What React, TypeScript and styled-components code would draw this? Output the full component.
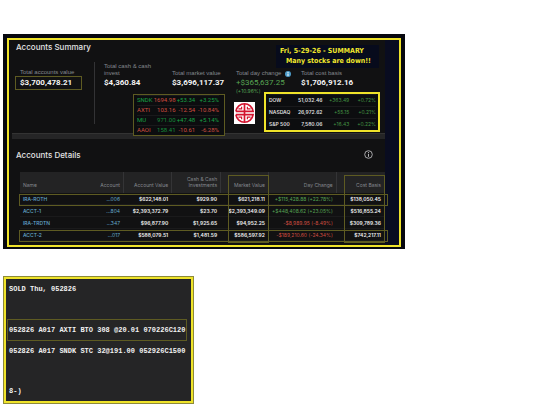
import React from "react";
import styled, { createGlobalStyle } from "styled-components";

const green = "#56a452";
const red = "#cf4d41";
const yellow = "#efe32a";
const olive = "#5e5b22";

const GlobalStyle = createGlobalStyle`
  * { box-sizing: border-box; }
  body { margin: 0; background: #fff; }
  h1, h2, dl, dd, dt, p { margin: 0; font-weight: inherit; }
`;

const Page = styled.main`
  display: flex;
  flex-direction: column;
  align-items: flex-start;
  gap: 27px;
  padding: 34px 3px 2px;
  font-family: Inter, "Liberation Sans", sans-serif;
`;

const Dashboard = styled.section`
  width: 100%;
  max-width: 402px;
  padding: 4px 4px 2px;
  background: #07080f;
`;

const Frame = styled.div`
  position: relative;
  border: 2px solid ${yellow};
  padding-right: 14px;
  background: #090c20;
`;

const Content = styled.div`
  background: #111112;
`;

const Heading = styled.h1`
  color: #e4e4e4;
  font-size: 8px;
  line-height: 10px;
  font-weight: 500;
`;

const SummaryHead = styled.header`
  height: 22px;
  padding: 2px 7px;
`;

const Banner = styled.p`
  position: absolute;
  top: 5px;
  right: 20px;
  width: 103px;
  padding: 1px 0 2px;
  background: #070b1c;
  color: #f0e62c;
  font: 700 7px/10px "DejaVu Sans Condensed", "DejaVu Sans", sans-serif;
  white-space: nowrap;
`;

const BannerLine = styled.span<{ $indent?: boolean }>`
  display: block;
  padding-left: ${(p) => (p.$indent ? 10 : 4)}px;
`;

const SummaryBody = styled.div`
  display: flex;
  align-items: flex-start;
`;

const AccountsTotal = styled.div`
  flex: 0 0 86px;
  height: 62px;
  padding-left: 6px;
  border-right: 1px solid #333335;
`;

const Figures = styled.div`
  flex: 1;
  padding-left: 9px;
`;

const Metrics = styled.dl`
  display: grid;
  grid-template-columns: 68fr 64fr 65fr 84fr;
`;

const Metric = styled.div`
  padding-top: 1px;
  white-space: nowrap;
`;

const MetricLabel = styled.dt`
  display: flex;
  align-items: flex-end;
  gap: 4px;
  height: 14px;
  color: #85888e;
  font: 400 6px/7px "Liberation Sans", sans-serif;
  white-space: pre-line;
`;

const MetricValue = styled.dd<{ $up?: boolean; $boxed?: boolean }>`
  width: fit-content;
  color: ${(p) => (p.$up ? "#58a653" : "#f4f4f4")};
  font: ${(p) => (p.$up ? 400 : 700)} 8px/12px Roboto, sans-serif;
  ${(p) => p.$boxed && `border: 1px solid ${olive}; padding: 0 9px 0 4px;`}
`;

const AccountsLabel = styled(MetricLabel)`
  padding-left: 5px;
`;

const MetricNote = styled.dd`
  color: ${green};
  font-size: 5px;
  line-height: 5px;
`;

const Boxes = styled.div`
  position: relative;
  z-index: 1;
  display: flex;
  align-items: flex-start;
  gap: 9px;
  margin-top: -2px;
  padding: 0 5px 0 29px;
`;

const Quotes = styled.table`
  table-layout: fixed;
  border-collapse: separate;
  border-spacing: 0;
  background: #0c0d0f;
  white-space: nowrap;
`;

const TickerQuotes = styled(Quotes)`
  flex: 0 0 92px;
  width: 92px;
  margin-top: 2px;
  padding: 0 5px 0 3px;
  border: 1px solid ${olive};
  font: 400 6px/6px Roboto, sans-serif;
`;

const IndexQuotes = styled(Quotes)`
  flex: 1;
  padding: 0 2px 0 3px;
  border: 2px solid ${yellow};
  font-size: 5px;
  line-height: 6px;
`;

const QuoteCell = styled.td<{ $color: string; $share: number; $bold?: boolean; $tall?: boolean }>`
  width: ${(p) => p.$share}%;
  height: ${(p) => (p.$tall ? 12 : 10)}px;
  padding: 0 0 ${(p) => (p.$tall ? 2 : 1)}px;
  color: ${(p) => p.$color};
  font-weight: ${(p) => (p.$bold ? 600 : 400)};
  text-align: right;
  border-top: 1px solid #19191b;
  &:first-child { text-align: left; }
`;

const Logo = styled.svg`
  flex: 0 0 21px;
  height: 22px;
  margin-top: 10px;
`;

const Divider = styled.hr`
  height: 6px;
  margin: -3px 0 0 3px;
  border: 0;
  border-top: 1px solid #333;
  background: #252526;
`;

const DetailsHead = styled.header`
  display: flex;
  align-items: center;
  justify-content: space-between;
  height: 33px;
  padding: 0 12px 2px 7px;
`;

const IconButton = styled.button`
  display: flex;
  padding: 0;
  border: 0;
  background: none;
  color: #b5b5b8;
`;

const TableArea = styled.div`
  padding: 0 0 4px 11px;
`;

const Accounts = styled.table`
  position: relative;
  width: 100%;
  table-layout: fixed;
  border-collapse: separate;
  border-spacing: 0;
  font-size: 5px;
  line-height: 6px;
  white-space: nowrap;
`;

const HeadCell = styled.th<{ $share: number; $line?: boolean; $marked?: boolean }>`
  position: relative;
  width: ${(p) => p.$share}%;
  height: 21px;
  padding: 0 3px 5px;
  background: #232324;
  border-right: 1px solid ${(p) => (p.$line ? "#343436" : "#232324")};
  color: #85888e;
  font-weight: 400;
  text-align: right;
  vertical-align: bottom;
  white-space: pre-line;
  &:first-child { text-align: left; }
  ${(p) =>
    p.$marked &&
    `&::after {
      content: "";
      position: absolute;
      z-index: 1;
      top: 3px;
      right: -1px;
      left: 7px;
      height: 66px;
      border: 1px solid ${olive};
    }`}
`;

const Row = styled.tr<{ $marked?: boolean }>`
  position: relative;
  ${(p) =>
    p.$marked &&
    `&::after {
      content: "";
      position: absolute;
      top: 1px;
      right: -3px;
      left: -1px;
      height: 10px;
      border: 1px solid ${olive};
    }`}
`;

const Cell = styled.td<{ $color?: string }>`
  height: 12px;
  padding: 0 4px 0 3px;
  color: ${(p) => p.$color || "#f0f0f0"};
  font-weight: ${(p) => (p.$color ? 400 : 600)};
  text-align: right;
  border-bottom: 1px solid #1a1a1b;
`;

const NameCell = styled(Cell)`
  text-align: left;
`;

const AccountLink = styled.a`
  color: #65a9cd;
  font-weight: 500;
  text-decoration: none;
`;

const Note = styled.section`
  width: 191px;
  max-width: 100%;
  padding: 0 4px 0 1px;
  border: 3px solid ${yellow};
  outline: 1px solid #8d8a3a;
  outline-offset: -1px;
  background: #252526;
  color: #f2f2f2;
  font: 700 7px/20px "Liberation Mono", monospace;
  white-space: pre;
`;

const NoteLine = styled.p<{ $marked?: boolean }>`
  min-height: 20px;
  padding-left: 1px;
  border: 1px solid ${(p) => (p.$marked ? olive : "transparent")};
  border-width: ${(p) => (p.$marked ? "1px" : "0 1px")};
`;

const tickers = [
  ["SNDK", "1694.98", "+53.34", "+3.25%", red, "#18a045"],
  ["AXTI", "103.16", "-12.54", "-10.84%", red, red],
  ["MU", "971.00", "+47.48", "+5.14%", "#168b3c", "#18a045"],
  ["AAOI", "158.41", "-10.61", "-6.28%", "#168b3c", red],
];

const indexes = [
  ["DOW", "51,032.46", "+363.49", "+0.72%"],
  ["NASDAQ", "26,972.62", "+55.15", "+0.21%"],
  ["S&P 500", "7,580.06", "+16.43", "+0.22%"],
];

const columns = [
  { label: "Name", share: 16.4 },
  { label: "Account", share: 12.1, line: true },
  { label: "Account Value", share: 13.2, line: true },
  { label: "Cash & Cash\nInvestments", share: 13.4, line: true },
  { label: "Market Value", share: 13.1, line: true, marked: true },
  { label: "Day Change", share: 18.6, line: true },
  { label: "Cost Basis", share: 13.2, marked: true },
];

const accounts = [
  { name: "IRA-ROTH", id: "...006", value: "$622,148.01", cash: "$929.90", market: "$621,218.11", day: "+$115,428.88 (+22.78%)", basis: "$138,050.45", marked: true },
  { name: "ACCT-1", id: "...804", value: "$2,393,372.79", cash: "$23.70", market: "$2,393,349.09", day: "+$448,408.62 (+23.05%)", basis: "$516,855.24" },
  { name: "IRA-TRDTN", id: "...347", value: "$96,877.90", cash: "$1,925.65", market: "$94,952.25", day: "-$8,989.95 (-8.49%)", basis: "$309,789.36" },
  { name: "ACCT-2", id: "...017", value: "$588,079.51", cash: "$1,481.59", market: "$586,597.92", day: "-$189,210.60 (-24.34%)", basis: "$742,217.11", marked: true },
];

const noteLines = [
  "SOLD Thu, 052826",
  "",
  "052826 A017 AXTI BTO 308 @20.01 070226C120",
  "052826 A017 SNDK STC 32@191.00 052926C1500",
  "",
  "8-)",
];

function Emblem() {
  return (
    <Logo viewBox="0 0 21 22" aria-label="Longevity emblem" role="img">
      <rect width="21" height="22" fill="#fff" />
      <g fill="none" stroke="#d3142f" strokeWidth="1.7">
        <path d="M1.9 9.4A8.7 9 0 0 1 19.1 9.4H1.9M1.9 12.6A8.7 9 0 0 0 19.1 12.6H1.9" />
        <path d="M10.5 2v18" />
        <path d="M7.6 4.8v2H4.4M13.4 4.8v2h3.2M7.6 17.2v-2H4.4M13.4 17.2v-2h3.2" strokeWidth="1.2" />
      </g>
    </Logo>
  );
}

export default function App() {
  return (
    <>
      <GlobalStyle />
      <Page>
        <Dashboard>
          <Frame>
            <Content>
              <SummaryHead>
                <Heading>Accounts Summary</Heading>
              </SummaryHead>
              <SummaryBody>
                <AccountsTotal>
                  <dl>
                    <AccountsLabel>Total accounts value</AccountsLabel>
                    <MetricValue $boxed>$3,700,478.21</MetricValue>
                  </dl>
                </AccountsTotal>
                <Figures>
                  <Metrics>
                    <Metric>
                      <MetricLabel>{"Total cash & cash\ninvest"}</MetricLabel>
                      <MetricValue>$4,360.84</MetricValue>
                    </Metric>
                    <Metric>
                      <MetricLabel>Total market value</MetricLabel>
                      <MetricValue>$3,696,117.37</MetricValue>
                    </Metric>
                    <Metric>
                      <MetricLabel>
                        Total day change
                        <svg width="6" height="6" viewBox="0 0 6 6" aria-hidden="true">
                          <circle cx="3" cy="3" r="3" fill="#4d9cc9" />
                          <path d="M3 1v1M3 2.5v2.5" stroke="#fff" />
                        </svg>
                      </MetricLabel>
                      <MetricValue $up>+$365,637.25</MetricValue>
                      <MetricNote>(+10.96%)</MetricNote>
                    </Metric>
                    <Metric>
                      <MetricLabel>Total cost basis</MetricLabel>
                      <MetricValue>$1,706,912.16</MetricValue>
                    </Metric>
                  </Metrics>
                  <Boxes>
                    <TickerQuotes>
                      <tbody>
                        {tickers.map(([name, price, change, pct, priceColor, color]) => (
                          <tr key={name}>
                            <QuoteCell $share={20} $color={color}>{name}</QuoteCell>
                            <QuoteCell $share={27} $color={priceColor}>{price}</QuoteCell>
                            <QuoteCell $share={24} $color={color}>{change}</QuoteCell>
                            <QuoteCell $share={29} $color={color}>{pct}</QuoteCell>
                          </tr>
                        ))}
                      </tbody>
                    </TickerQuotes>
                    <Emblem />
                    <IndexQuotes>
                      <tbody>
                        {indexes.map(([name, level, change, pct]) => (
                          <tr key={name}>
                            <QuoteCell $share={24} $tall $bold $color="#dedede">{name}</QuoteCell>
                            <QuoteCell $share={26} $tall $bold $color="#dedede">{level}</QuoteCell>
                            <QuoteCell $share={25} $tall $color="#439343">{change}</QuoteCell>
                            <QuoteCell $share={25} $tall $color="#439343">{pct}</QuoteCell>
                          </tr>
                        ))}
                      </tbody>
                    </IndexQuotes>
                  </Boxes>
                </Figures>
              </SummaryBody>
              <Divider />
              <DetailsHead>
                <Heading as="h2">Accounts Details</Heading>
                <IconButton aria-label="About account details">
                  <svg width="9" height="9" viewBox="0 0 9 9" fill="none" stroke="currentColor">
                    <circle cx="4.5" cy="4.5" r="3.8" strokeWidth="0.9" />
                    <path d="M4.5 2.1v1M4.5 3.9v2.9" />
                  </svg>
                </IconButton>
              </DetailsHead>
              <TableArea>
                <Accounts>
                  <thead>
                    <tr>
                      {columns.map((c) => (
                        <HeadCell key={c.label} $share={c.share} $line={c.line} $marked={c.marked}>
                          {c.label}
                        </HeadCell>
                      ))}
                    </tr>
                  </thead>
                  <tbody>
                    {accounts.map((a) => (
                      <Row key={a.name} $marked={a.marked}>
                        <NameCell>
                          <AccountLink href="#">{a.name}</AccountLink>
                        </NameCell>
                        <Cell $color="#65a9cd">{a.id}</Cell>
                        <Cell>{a.value}</Cell>
                        <Cell>{a.cash}</Cell>
                        <Cell>{a.market}</Cell>
                        <Cell $color={a.day[0] === "+" ? green : red}>{a.day}</Cell>
                        <Cell>{a.basis}</Cell>
                      </Row>
                    ))}
                  </tbody>
                </Accounts>
              </TableArea>
            </Content>
            <Banner>
              <BannerLine>Fri, 5-29-26 - SUMMARY</BannerLine>
              <BannerLine $indent>Many stocks are down!!</BannerLine>
            </Banner>
          </Frame>
        </Dashboard>
        <Note>
          {noteLines.map((line, i) => (
            <NoteLine key={i} $marked={i === 2}>{line}</NoteLine>
          ))}
        </Note>
      </Page>
    </>
  );
}
